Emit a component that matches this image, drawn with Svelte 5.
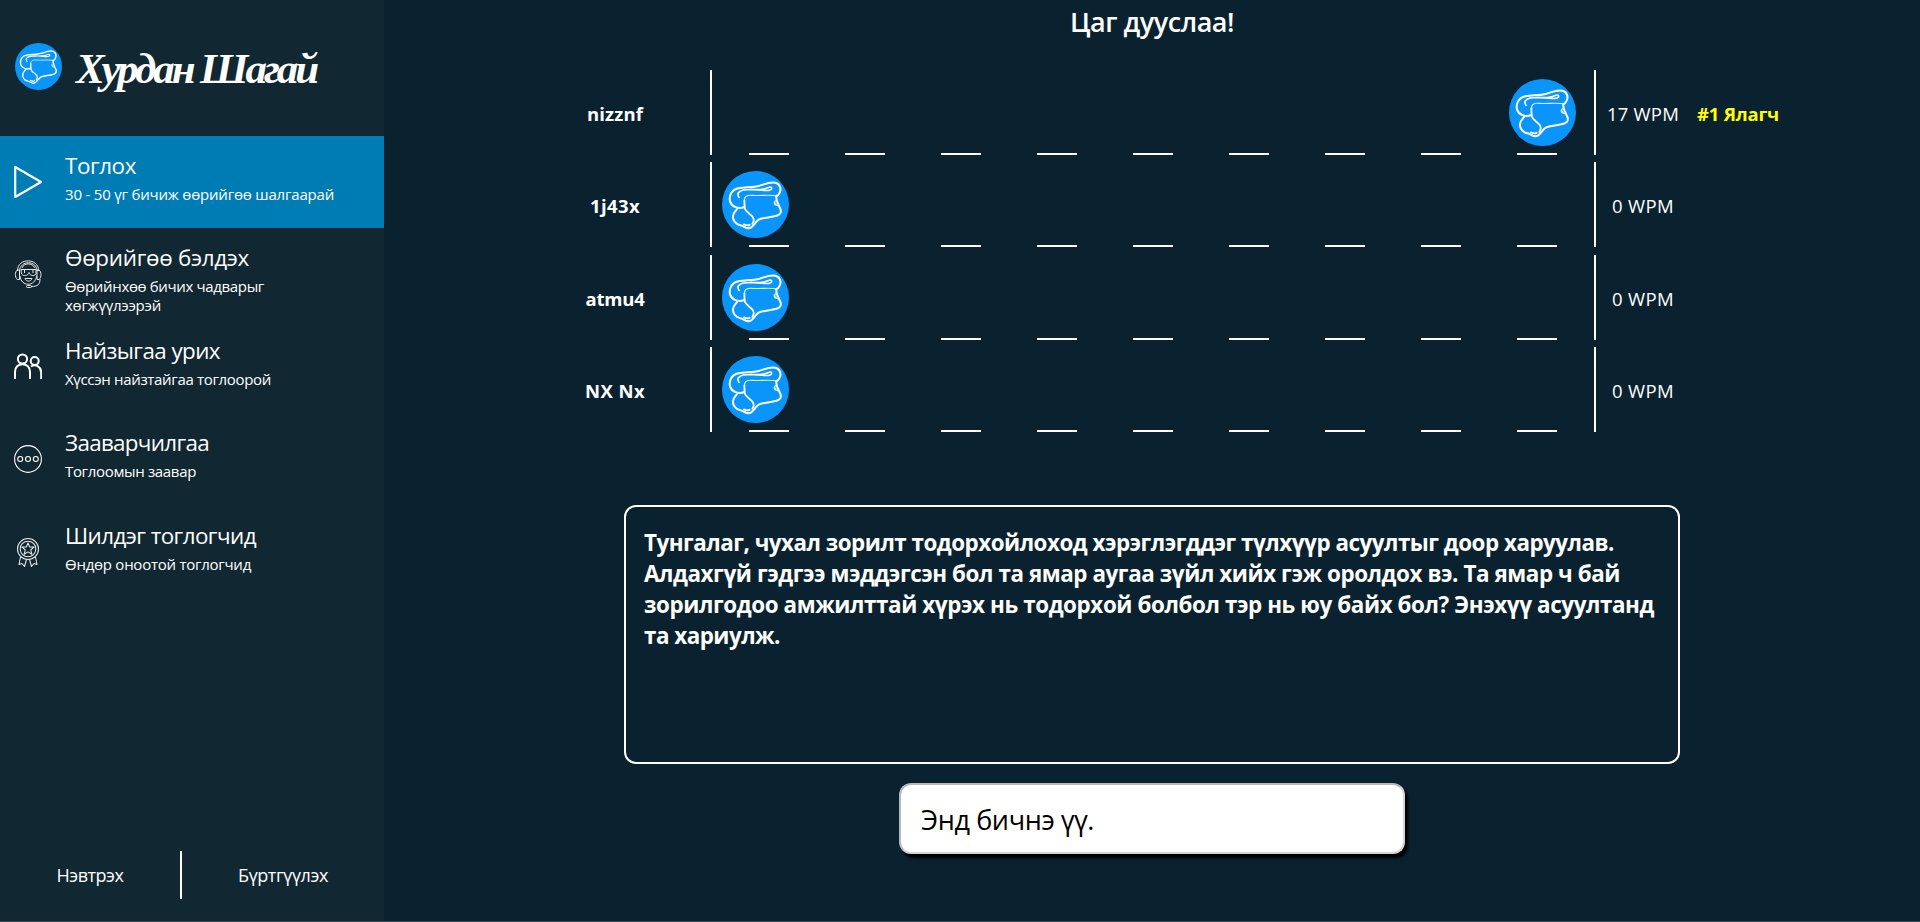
<script>
  const menu = [
    { icon: 'play', title: 'Тоглох', tw: 71, lines: [['30 - 50 үг бичиж өөрийгөө шалгаарай', 269]], active: true },
    { icon: 'headset', title: 'Өөрийгөө бэлдэх', tw: 184, lines: [['Өөрийнхөө бичих чадварыг', 199], ['хөгжүүлээрэй', 96]] },
    { icon: 'people', title: 'Найзыгаа урих', tw: 155, lines: [['Хүссэн найзтайгаа тоглоорой', 206]] },
    { icon: 'dots', title: 'Зааварчилгаа', tw: 144, lines: [['Тоглоомын заавар', 131]] },
    { icon: 'medal', title: 'Шилдэг тоглогчид', tw: 191, lines: [['Өндөр оноотой тоглогчид', 186]] }
  ];

  const players = [
    { name: 'nizznf', nw: 56, wpm: '17 WPM', ww: 72, progress: 787, place: '#1 Ялагч' },
    { name: '1j43x', nw: 50, wpm: '0 WPM', ww: 62, progress: 0 },
    { name: 'atmu4', nw: 59, wpm: '0 WPM', ww: 62, progress: 0 },
    { name: 'NX Nx', nw: 60, wpm: '0 WPM', ww: 62, progress: 0 }
  ];

  const passage = [
    ['Тунгалаг, чухал зорилт тодорхойлоход хэрэглэгддэг түлхүүр асуултыг доор харуулав.', 970],
    ['Алдахгүй гэдгээ мэддэгсэн бол та ямар аугаа зүйл хийх гэж оролдох вэ. Та ямар ч бай', 976],
    ['зорилгодоо амжилттай хүрэх нь тодорхой болбол тэр нь юу байх бол? Энэхүү асуултанд', 1010],
    ['та хариулж.', 136]
  ];

  // Tracks a line of text so that it takes the given width.
  function fit(node, width) {
    const natural = node.getBoundingClientRect().width;
    const gaps = Math.max(1, node.textContent.trim().length);
    node.style.letterSpacing = `${(width - natural) / gaps}px`;
  }
</script>

{#snippet logo(size)}
  <svg class="logo" width={size} height={size} viewBox="0 0 201 201" fill="none" stroke="#fff" stroke-linecap="round" stroke-linejoin="round">
    <circle cx="100.500" cy="100.500" r="100.500" fill="#0a95fa" stroke="none" />
    <path stroke-width="6" d="M67 108C48 116 29 107 24 91C20 73 30 56 49 52C72 48 92 50 113 44C132 38 149 30 163 36C175 41 178 54 173 65C171 70 168 74 163 75" />
    <path stroke-width="5" d="M51 79C44 69 49 60 64 57C86 53 105 58 124 54C137 52 143 45 148 49C152 56 142 60 128 58C110 56 101 55 88 56" />
    <path stroke-width="3.500" opacity="0.85" d="M68 90C65 77 75 72 89 73C114 75 145 70 165 75" />
    <path stroke-width="6" d="M163 75C162 83 164 90 168 98L176 116C178 127 175 131 164 134C146 140 122 139 110 146C99 153 93 171 80 172C70 173 66 165 55 163C41 160 32 148 33 136C33 124 42 121 46 112" />
    <path stroke-width="5.500" d="M67 88L68 112C73 128 91 129 95 144C97 150 94 153 91 158M66 160C72 163 79 164 83 161" />
    <path stroke-width="3.500" opacity="0.8" d="M164 88C154 90 153 102 167 104M158 94L163 100" />
  </svg>
{/snippet}

{#snippet glyph(kind)}
  <svg class="glyph" width="28" height="34" viewBox="0 0 28 34" fill="none" stroke="#fff" stroke-linejoin="round">
    {#if kind === 'play'}
      <path stroke-width="2.200" d="M1.200 2V32L27 17Z" />
    {:else if kind === 'headset'}
      <g stroke-width="1" opacity="0.9">
        <path d="M3.500 14C3 .5 25 .5 24.700 14M5.500 14C6 3 23 3 23 14M8 11C10 5.500 18 5.500 21 11" />
        <path d="M5.500 13H3.300C.7 15 .7 20 3.300 22.500H5.500ZM23 13h2C27.700 15 27.700 20 25 22.500h-2Z" />
        <path d="M6 19C7 30 21 30 22.700 19M7 12.500H22V17C20 19.500 16 19 15 15.500C14 19 9.500 19.500 7.500 17ZM10.500 13v3M19 13v3M11 21.500H18C17 25 12 25 11 21.500ZM26 22C26 27.500 24 29.500 17 29.500" />
        <rect x="12.500" y="28.500" width="5" height="2" rx="1" />
      </g>
    {:else if kind === 'people'}
      <g stroke-width="2">
        <circle cx="8.500" cy="9" r="4.600" />
        <circle cx="20.700" cy="11" r="4" />
        <path d="M1 29V22C1 11.500 16 11.500 16 22V29M17 16.500C22 13.500 27.200 17 27.200 22.500V29" />
      </g>
    {:else if kind === 'dots'}
      <g stroke-width="1.100">
        <circle cx="14" cy="17" r="13.400" />
        <circle cx="6.200" cy="17" r="2.500" />
        <circle cx="14" cy="17" r="2.500" />
        <circle cx="21.800" cy="17" r="2.500" />
      </g>
    {:else}
      <g stroke-width="1.050" opacity="0.9">
        <circle cx="14" cy="14" r="10.500" />
        <circle cx="14" cy="14" r="7.800" />
        <path d="m14 8 1.700 4h4.400l-3.400 2.900 1.200 4.400-3.900-2.400-3.900 2.400 1.200-4.400-3.400-2.900h4.400Z" />
        <path d="M6.500 22 5 29.500l3-1 2.500 3 2-7M21.500 22 23 29.500l-3-1-2.500 3-2-7" />
      </g>
    {/if}
  </svg>
{/snippet}

<div class="page">
  <aside class="sidebar">
    <header class="brand">
      {@render logo(47)}
      <h1><span use:fit={240}>Хурдан Шагай</span></h1>
    </header>
    <nav>
      {#each menu as item}
        <div class="item" class:active={item.active}>
          {@render glyph(item.icon)}
          <div class="label">
            <div class="title"><span use:fit={item.tw}>{item.title}</span></div>
            {#each item.lines as [text, width]}
              <div class="sub"><span use:fit={width}>{text}</span></div>
            {/each}
          </div>
        </div>
      {/each}
    </nav>
    <footer class="auth">
      <div class="login"><span use:fit={67}>Нэвтрэх</span></div>
      <div class="register"><span use:fit={90}>Бүртгүүлэх</span></div>
    </footer>
  </aside>

  <main>
    <h2><span use:fit={164}>Цаг дууслаа!</span></h2>
    <section class="race">
      {#each players as p}
        <div class="row">
          <div class="name"><span use:fit={p.nw}>{p.name}</span></div>
          <div class="track">
            <div class="runner" style="margin-left: {p.progress}px">{@render logo(67)}</div>
            <div class="dashes">
              {#each Array(9) as _}<i></i>{/each}
            </div>
          </div>
          <div class="wpm"><span use:fit={p.ww}>{p.wpm}</span></div>
          {#if p.place}<div class="place"><span use:fit={82}>{p.place}</span></div>{/if}
        </div>
      {/each}
    </section>
    <section class="passage">
      {#each passage as [text, width]}
        <div><span use:fit={width}>{text}</span></div>
      {/each}
    </section>
    <div class="entry"><span use:fit={173}>Энд бичнэ үү.</span></div>
  </main>
</div>

<style>
  :global(body) {
    background: #0a2230;
  }
  .page {
    box-sizing: border-box;
    display: flex;
    width: 1920px;
    height: 922px;
    overflow: hidden;
    border-bottom: 1px solid #3b4b55;
    background: #0a2230;
    color: #fff;
    font-family: 'Open Sans', 'Noto Sans', sans-serif;
  }
  span {
    display: inline-block;
    white-space: nowrap;
  }
  svg {
    display: block;
    flex: none;
  }
  .sidebar {
    display: flex;
    flex-direction: column;
    width: 384px;
    background: #112732;
  }
  .brand {
    box-sizing: border-box;
    display: flex;
    height: 136px;
    padding: 43px 0 0 15px;
  }
  h1 {
    margin: -2px 0 0 14px;
    font: italic bold 43px/56px 'Liberation Serif', serif;
  }
  .item {
    box-sizing: border-box;
    display: flex;
    height: 92.400px;
    padding: 14.500px 0 0 14px;
  }
  .item + .item {
    padding-top: 15.100px;
  }
  .active {
    background: #007cb5;
  }
  .glyph {
    margin-top: 14px;
  }
  .label {
    margin-left: 23px;
  }
  .title {
    height: 31px;
    font-size: 22.400px;
    line-height: 30px;
  }
  .sub {
    height: 19px;
    font-size: 15px;
    line-height: 19px;
  }
  .title + .sub {
    margin-top: 3px;
  }
  .auth {
    display: flex;
    height: 48px;
    margin-top: auto;
    margin-bottom: 22px;
    font-size: 18px;
    line-height: 49px;
    text-align: center;
  }
  .login {
    width: 180px;
    border-right: 2px solid #fff;
  }
  .register {
    flex: 1;
  }
  main {
    flex: 1;
  }
  h2 {
    height: 70px;
    margin: 0;
    font-size: 27px;
    font-weight: 600;
    line-height: 44px;
    text-align: center;
  }
  .race {
    height: 435px;
  }
  .row {
    display: flex;
    height: 92.400px;
    font-size: 18.500px;
    line-height: 88px;
  }
  .name {
    width: 96px;
    margin-left: 183px;
    font-weight: bold;
    text-align: center;
  }
  .track {
    box-sizing: border-box;
    display: flex;
    flex-direction: column;
    justify-content: space-between;
    width: 886px;
    height: 85px;
    margin-left: 47px;
    padding-top: 9px;
    border: solid #fff;
    border-width: 0 2px;
  }
  .runner {
    padding-left: 10px;
  }
  .dashes {
    display: flex;
    gap: 56px;
    margin-left: 37px;
  }
  .dashes i {
    width: 40px;
    height: 2px;
    background: #fff;
  }
  .wpm {
    width: 94px;
    text-align: center;
  }
  .place {
    margin-left: 7px;
    color: #ff0;
    font-weight: bold;
  }
  .passage {
    box-sizing: border-box;
    width: 1056px;
    height: 259px;
    margin-left: 240px;
    padding: 20px 18px;
    border: 2px solid #fff;
    border-radius: 12px;
    font-size: 22.400px;
    font-weight: bold;
    line-height: 32px;
  }
  .passage div {
    height: 31px;
  }
  .entry {
    box-sizing: border-box;
    width: 506px;
    height: 71px;
    margin: 19px 0 0 515px;
    padding-left: 20px;
    border: 2px solid;
    border-color: #b8b8b8 #d4d4d4 #d4d4d4 #b8b8b8;
    border-radius: 12px;
    background: #fff;
    box-shadow: 3px 4px 3px #000;
    color: #000;
    font-size: 27px;
    line-height: 70px;
  }
</style>
